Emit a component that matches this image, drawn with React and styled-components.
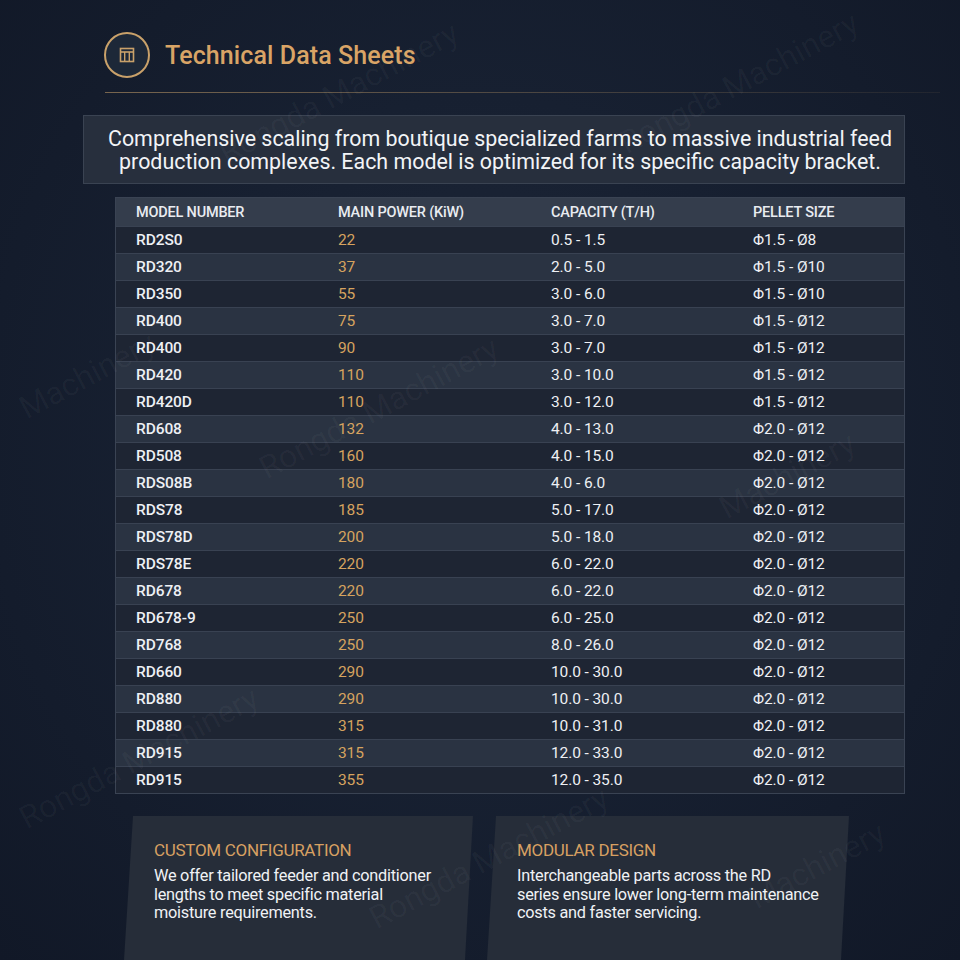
import React from "react";
import styled, { createGlobalStyle } from "styled-components";

const GlobalStyle = createGlobalStyle`
  *, *::before, *::after {
    box-sizing: border-box;
  }
  body {
    margin: 0;
    background: #131a28;
    font-family: Roboto, "Liberation Sans", sans-serif;
  }
`;

const Page = styled.div`
  position: relative;
  width: 960px;
  height: 960px;
  overflow: hidden;
  display: flex;
  flex-direction: column;
  background: radial-gradient(
      ellipse at 50% 45%,
      #1e2738 0%,
      #172031 45%,
      #111827 100%
    );
`;

const Header = styled.div`
  display: flex;
  align-items: center;
  gap: 15px;
  margin: 32px 0 0 104px;
`;

const IconRing = styled.div`
  width: 46px;
  height: 46px;
  border-radius: 50%;
  border: 2px solid #c9a16a;
  background: #1d2838;
  display: flex;
  align-items: center;
  justify-content: center;
`;

const Title = styled.h1`
  margin: 0;
  font-size: 25px;
  font-weight: 500;
  color: #d9a466;
  letter-spacing: 0.1px;
`;

const Divider = styled.div`
  height: 1px;
  margin: 14px 20px 0 105px;
  background: linear-gradient(
    90deg,
    rgba(201, 161, 106, 0.55),
    rgba(201, 161, 106, 0.25) 60%,
    rgba(201, 161, 106, 0.08)
  );
`;

const Intro = styled.div`
  margin: 22px 55px 0 83px;
  height: 69px;
  display: flex;
  align-items: center;
  justify-content: center;
  padding-left: 12px;
  background: #272f3d;
  border: 1px solid #3a4352;
  color: #f2f4f7;
  font-size: 21.4px;
  line-height: 23px;
  text-align: center;
`;

const Table = styled.div`
  margin: 13px 55px 0 115px;
  border: 1px solid #3a4353;
  background: #1f2634;
`;

const Row = styled.div`
  display: grid;
  grid-template-columns: 202px 213px 202px 1fr;
  align-items: center;
  height: ${(p) => (p.head ? "28px" : "27px")};
  padding-left: 20px;
  background: ${(p) =>
    p.head ? "#343d4c" : p.odd ? "#1e2533" : "#2a3342"};
  border-top: ${(p) => (p.head ? "none" : "1px solid #394252")};
`;

const HeadCell = styled.div`
  font-size: 14.5px;
  font-weight: 500;
  color: #e9ecf1;
  letter-spacing: -0.2px;
`;

const Cell = styled.div`
  font-size: 15.5px;
  font-weight: ${(p) => (p.strong ? 500 : 400)};
  color: ${(p) => (p.gold ? "#d6a35f" : "#eef0f4")};
  letter-spacing: -0.1px;
`;

const Cards = styled.div`
  display: flex;
  gap: 14px;
  margin: 22px 0 0 124px;
  flex: 1;
`;

const Card = styled.div`
  width: ${(p) => p.w}px;
  background: #262d39;
  clip-path: polygon(9px 0, 100% 0, calc(100% - 8px) 100%, 0 100%);
  padding: 24px 24px 0 30px;
`;

const CardTitle = styled.div`
  font-size: 17px;
  color: #d7a062;
  letter-spacing: -0.3px;
  margin-bottom: 7px;
`;

const CardText = styled.div`
  font-size: 16.3px;
  line-height: 18.5px;
  color: #f0f2f5;
  letter-spacing: -0.25px;
`;

const Watermark = styled.div`
  position: absolute;
  left: ${(p) => p.x}px;
  top: ${(p) => p.y}px;
  transform: rotate(-28deg);
  transform-origin: left bottom;
  font-size: 32px;
  line-height: 36px;
  color: rgba(255, 255, 255, 0.035);
  white-space: nowrap;
  pointer-events: none;
`;

const rows = [
  ["RD2S0", "22", "0.5 - 1.5", "Φ1.5 - Ø8"],
  ["RD320", "37", "2.0 - 5.0", "Φ1.5 - Ø10"],
  ["RD350", "55", "3.0 - 6.0", "Φ1.5 - Ø10"],
  ["RD400", "75", "3.0 - 7.0", "Φ1.5 - Ø12"],
  ["RD400", "90", "3.0 - 7.0", "Φ1.5 - Ø12"],
  ["RD420", "110", "3.0 - 10.0", "Φ1.5 - Ø12"],
  ["RD420D", "110", "3.0 - 12.0", "Φ1.5 - Ø12"],
  ["RD608", "132", "4.0 - 13.0", "Φ2.0 - Ø12"],
  ["RD508", "160", "4.0 - 15.0", "Φ2.0 - Ø12"],
  ["RDS08B", "180", "4.0 - 6.0", "Φ2.0 - Ø12"],
  ["RDS78", "185", "5.0 - 17.0", "Φ2.0 - Ø12"],
  ["RDS78D", "200", "5.0 - 18.0", "Φ2.0 - Ø12"],
  ["RDS78E", "220", "6.0 - 22.0", "Φ2.0 - Ø12"],
  ["RD678", "220", "6.0 - 22.0", "Φ2.0 - Ø12"],
  ["RD678-9", "250", "6.0 - 25.0", "Φ2.0 - Ø12"],
  ["RD768", "250", "8.0 - 26.0", "Φ2.0 - Ø12"],
  ["RD660", "290", "10.0 - 30.0", "Φ2.0 - Ø12"],
  ["RD880", "290", "10.0 - 30.0", "Φ2.0 - Ø12"],
  ["RD880", "315", "10.0 - 31.0", "Φ2.0 - Ø12"],
  ["RD915", "315", "12.0 - 33.0", "Φ2.0 - Ø12"],
  ["RD915", "355", "12.0 - 35.0", "Φ2.0 - Ø12"],
];

// faint diagonal brand watermark, kept inside the frame
const marks = [
  { x: 230, y: 135, t: "Rongda Machinery" },
  { x: 630, y: 125, t: "Rongda Machinery" },
  { x: 30, y: 390, t: "Machinery" },
  { x: 270, y: 450, t: "Rongda Machinery" },
  { x: 730, y: 490, t: "Machinery" },
  { x: 30, y: 800, t: "Rongda Machinery" },
  { x: 380, y: 900, t: "Rongda Machinery" },
  { x: 760, y: 880, t: "Machinery" },
];

const TableIcon = () => (
  <svg width="16" height="16" viewBox="0 0 16 16" fill="none">
    <rect x="1.5" y="1.5" width="13" height="13" stroke="#c9a16a" strokeWidth="1.6" />
    <line x1="1.5" y1="5" x2="14.5" y2="5" stroke="#c9a16a" strokeWidth="1.6" />
    <line x1="5.7" y1="5" x2="5.7" y2="14.5" stroke="#c9a16a" strokeWidth="1.4" />
    <line x1="10.3" y1="5" x2="10.3" y2="14.5" stroke="#c9a16a" strokeWidth="1.4" />
  </svg>
);

const App = () => {
  return (
    <Page>
      <GlobalStyle />
      <Header>
        <IconRing>
          <TableIcon />
        </IconRing>
        <Title>Technical Data Sheets</Title>
      </Header>
      <Divider />
      <Intro>
        Comprehensive scaling from boutique specialized farms to massive industrial feed
        <br />
        production complexes. Each model is optimized for its specific capacity bracket.
      </Intro>
      <Table>
        <Row head>
          <HeadCell>MODEL NUMBER</HeadCell>
          <HeadCell>MAIN POWER (KiW)</HeadCell>
          <HeadCell>CAPACITY (T/H)</HeadCell>
          <HeadCell>PELLET SIZE</HeadCell>
        </Row>
        {rows.map((r, i) => (
          <Row key={i} odd={i % 2 === 0}>
            <Cell strong>{r[0]}</Cell>
            <Cell gold>{r[1]}</Cell>
            <Cell>{r[2]}</Cell>
            <Cell>{r[3]}</Cell>
          </Row>
        ))}
      </Table>
      <Cards>
        <Card w={349}>
          <CardTitle>CUSTOM CONFIGURATION</CardTitle>
          <CardText>
            We offer tailored feeder and conditioner
            <br />
            lengths to meet specific material
            <br />
            moisture requirements.
          </CardText>
        </Card>
        <Card w={362}>
          <CardTitle>MODULAR DESIGN</CardTitle>
          <CardText>
            Interchangeable parts across the RD
            <br />
            series ensure lower long-term maintenance
            <br />
            costs and faster servicing.
          </CardText>
        </Card>
      </Cards>
      {marks.map((m, i) => (
        <Watermark key={i} x={m.x} y={m.y}>
          {m.t}
        </Watermark>
      ))}
    </Page>
  );
};

export default App;
